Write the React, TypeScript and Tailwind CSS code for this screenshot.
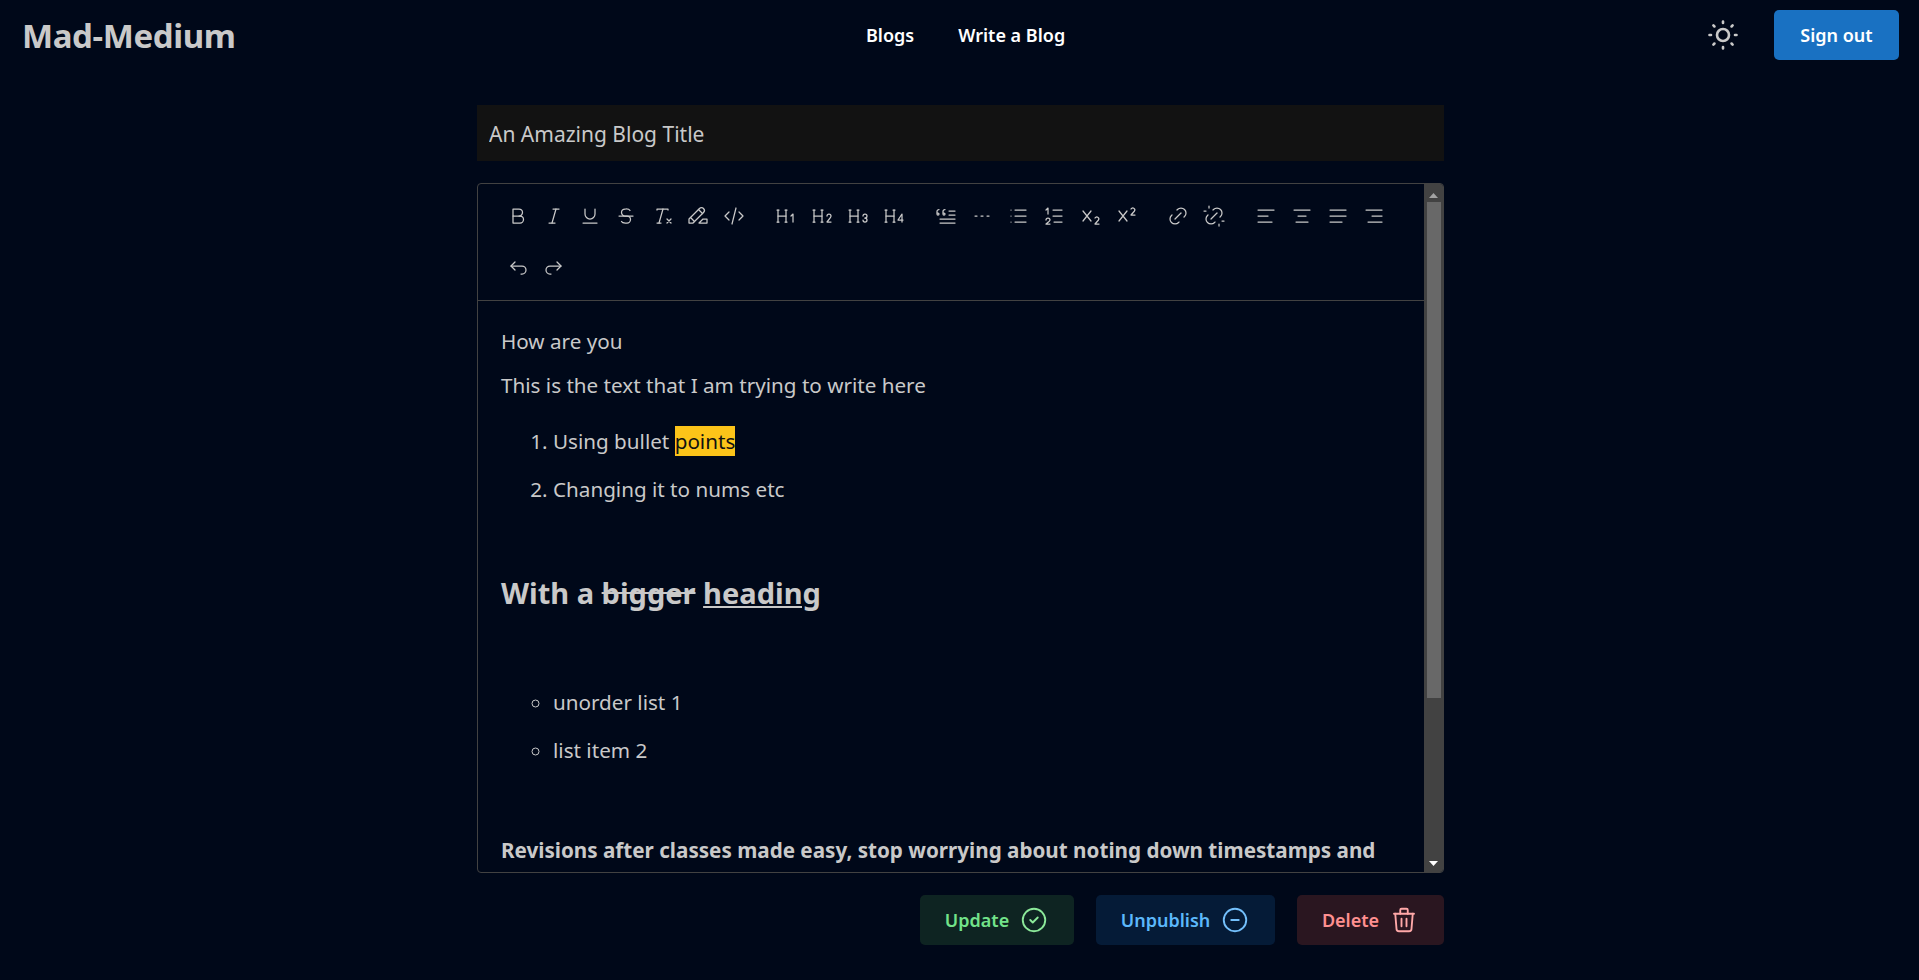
import React from "react";
import {
  TbBold, TbItalic, TbUnderline, TbStrikethrough, TbClearFormatting, TbHighlight, TbCode,
  TbH1, TbH2, TbH3, TbH4, TbBlockquote, TbLineDashed, TbList, TbListNumbers, TbSubscript, TbSuperscript,
  TbLink, TbUnlink, TbAlignLeft, TbAlignCenter, TbAlignJustified, TbAlignRight,
  TbArrowBackUp, TbArrowForwardUp, TbSun, TbCircleCheck, TbCircleMinus, TbTrash,
} from "react-icons/tb";

const TOOLBAR = [
  [TbBold, TbItalic, TbUnderline, TbStrikethrough, TbClearFormatting, TbHighlight, TbCode],
  [TbH1, TbH2, TbH3, TbH4],
  [TbBlockquote, TbLineDashed, TbList, TbListNumbers, TbSubscript, TbSuperscript],
  [TbLink, TbUnlink],
  [TbAlignLeft, TbAlignCenter, TbAlignJustified, TbAlignRight],
  [TbArrowBackUp, TbArrowForwardUp],
];

function Toolbar() {
  return (
    <div className="flex flex-wrap gap-x-4 gap-y-4 px-[22px] py-[14px] border-b border-[#424242]">
      {TOOLBAR.map((group, i) => (
        <div key={i} className="flex">
          {group.map((Icon, j) => (
            <button key={j} className="w-9 h-9 flex items-center justify-center text-[#c9c9c9]">
              <Icon size={24} strokeWidth={1.25} />
            </button>
          ))}
        </div>
      ))}
    </div>
  );
}

function Scrollbar() {
  return (
    <div className="w-[19px] shrink-0 bg-[#424242] flex flex-col items-center">
      <svg width="9" height="5" viewBox="0 0 9 5" className="mt-[9px] shrink-0">
        <polygon points="4.5,0 9,5 0,5" fill="#a3a3a3" />
      </svg>
      <div className="w-[14px] h-[496px] mt-[4px] bg-[#686868]" />
      <div className="flex-1" />
      <svg width="9" height="5" viewBox="0 0 9 5" className="mb-[6px] shrink-0">
        <polygon points="0,0 9,0 4.5,5" fill="#ffffff" />
      </svg>
    </div>
  );
}

export default function App() {
  return (
    <div
      className="h-[980px] overflow-hidden bg-[#000819] text-[#c9c9c9]"
      style={{ fontFamily: '"Noto Sans", sans-serif' }}
    >
      <header className="h-[70px] flex items-center justify-between pl-[22px] pr-5 relative">
        <h1 className="text-[33px] font-bold leading-none tracking-[-0.4px] mt-[1px]">Mad-Medium</h1>
        <nav className="absolute left-[866px] top-[24px] flex gap-[44px] text-white text-[18px] font-semibold leading-[22px]">
          <a>Blogs</a>
          <a>Write a Blog</a>
        </nav>
        <div className="flex items-center gap-[33px]">
          <TbSun size={36} strokeWidth={1.75} className="mb-[1px]" />
          <button className="w-[125px] h-[50px] rounded-[5px] bg-[#1971c2] text-white text-[18px] font-semibold">
            Sign out
          </button>
        </div>
      </header>

      <main className="w-[967px] ml-[477px] pt-[35px]">
        <input
          className="w-full h-[56px] bg-[#121212] px-3 pt-[2px] text-[21px] text-[#c9c9c9] outline-none"
          defaultValue="An Amazing Blog Title"
        />

        <div className="mt-[22px] h-[690px] flex border border-[#424242] rounded-[4px] overflow-hidden">
          <div className="flex-1 min-w-0">
            <Toolbar />
            <div className="pl-[23px] pr-[22px] pt-[24px] text-[20.65px] leading-[32px]">
              <p className="mb-[12px]">How are you</p>
              <p>This is the text that I am trying to write here</p>
              <ol className="list-decimal pl-[52px] mt-[24px]">
                <li className="mb-[16px]">
                  Using bullet <mark className="bg-[#fcc419] text-[#111] py-px">points</mark>
                </li>
                <li>Changing it to nums etc</li>
              </ol>
              <h2 className="text-[29px] font-bold leading-[40px] mt-[68px]">
                With a <s>bigger</s> <u>heading</u>
              </h2>
              <ul className="list-[circle] pl-[52px] mt-[73px]">
                <li className="mb-[16px]">unorder list 1</li>
                <li>list item 2</li>
              </ul>
              <p className="font-bold mt-[68px] whitespace-nowrap">
                Revisions after classes made easy, stop worrying about noting down timestamps and
              </p>
            </div>
          </div>
          <Scrollbar />
        </div>

        <div className="flex justify-end gap-[22px] mt-[22px] text-[18px] font-semibold">
          <button className="w-[154px] h-[50px] rounded-[5px] bg-[#0e2422] text-[#72e38a] flex items-center justify-center gap-[10px]">
            Update <TbCircleCheck size={30} strokeWidth={1.5} className="text-[#8ce99a]" />
          </button>
          <button className="w-[179px] h-[50px] rounded-[5px] bg-[#051b37] text-[#5cb8fb] flex items-center justify-center gap-[10px]">
            Unpublish <TbCircleMinus size={30} strokeWidth={1.5} className="text-[#74c0fc]" />
          </button>
          <button className="w-[147px] h-[50px] rounded-[5px] bg-[#2a1620] text-[#ff9090] flex items-center justify-center gap-[10px]">
            Delete <TbTrash size={30} strokeWidth={1.5} className="text-[#ffa8a8]" />
          </button>
        </div>
      </main>
    </div>
  );
}
